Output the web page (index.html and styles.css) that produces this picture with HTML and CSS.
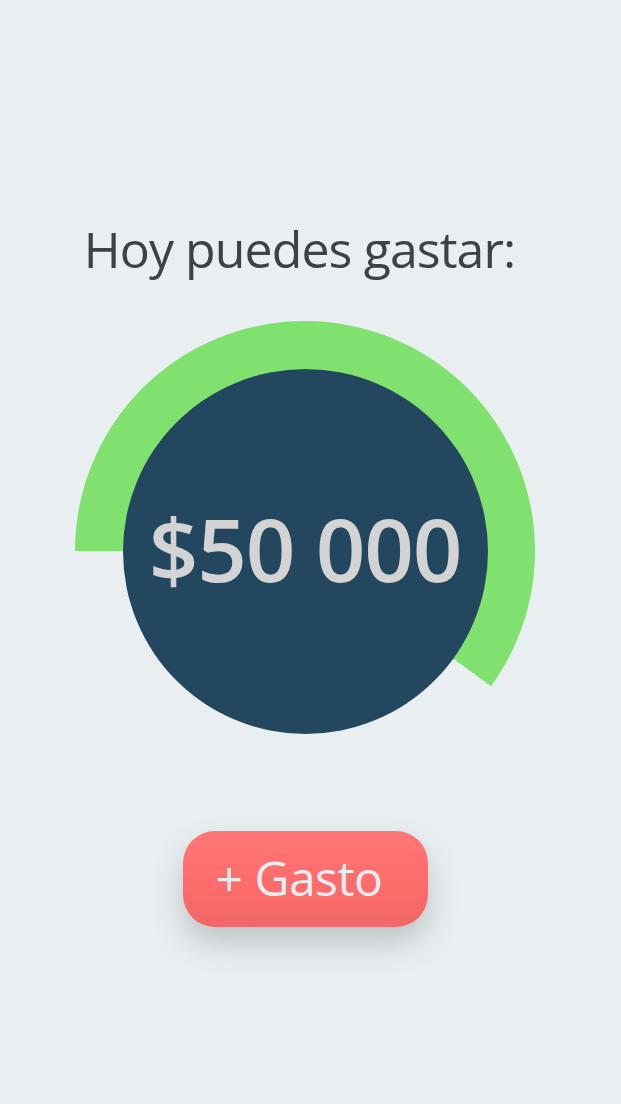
FILE: index.html
```html
<!DOCTYPE html>
<html lang="es">
<head>
<meta charset="utf-8">
<link rel="stylesheet" href="styles.css">
</head>
<body>
<main class="screen">
  <h1 class="title">Hoy puedes gastar:</h1>
  <div class="gauge">
    <div class="gauge-inner">
      <span class="amount">$50 000</span>
    </div>
  </div>
  <button class="add-btn">+ Gasto</button>
</main>
</body>
</html>
```
FILE: styles.css
```css
html, body {
  margin: 0;
  padding: 0;
  background: #e9eff0;
}
.screen {
  box-sizing: border-box;
  width: 621px;
  height: 1104px;
  padding-right: 11px;
  display: flex;
  flex-direction: column;
  align-items: center;
  font-family: "Open Sans", "Liberation Sans", sans-serif;
}
.title {
  margin: 215px 11px 0 0;
  font-weight: 400;
  font-size: 50px;
  line-height: 68px;
  color: #3d4244;
  letter-spacing: -0.9px;
}
.gauge {
  margin-top: 38px;
  width: 460px;
  height: 460px;
  border-radius: 50%;
  background: conic-gradient(from 270deg, #80e16f 0deg 216deg, transparent 216deg 360deg);
  display: flex;
  align-items: center;
  justify-content: center;
}
.gauge-inner {
  width: 365px;
  height: 365px;
  border-radius: 50%;
  background: #22475f;
  display: flex;
  align-items: center;
  justify-content: center;
}
.amount {
  font-weight: 600;
  font-size: 87px;
  color: #d3d3d3;
  letter-spacing: -1.2px;
  line-height: 1;
  margin-top: -6px;
}
.add-btn {
  margin-top: 50px;
  width: 245px;
  height: 96px;
  border: none;
  border-radius: 32px;
  background: linear-gradient(180deg, #ff7777 0%, #fd6b6b 60%, #ef6769 100%);
  box-shadow: 0 16px 30px rgba(60, 70, 75, 0.25);
  color: #e8eef0;
  font-family: "Open Sans", "Liberation Sans", sans-serif;
  font-size: 48px;
  font-weight: 400;
  padding: 0 12px 4px 0;
  letter-spacing: -0.5px;
}
```
